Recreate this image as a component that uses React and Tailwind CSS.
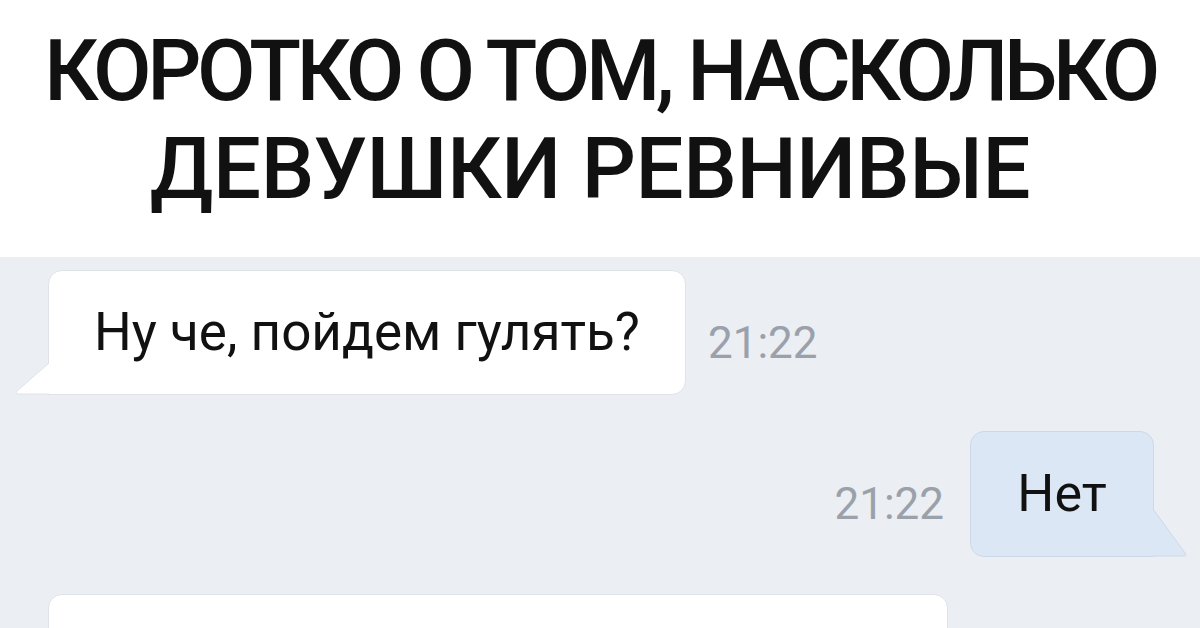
export default function App() {
  return (
    <div className="w-[1200px] h-[628px] overflow-hidden bg-[#ebeef2] font-['Roboto',sans-serif]">
      {/* Заголовок */}
      <div className="h-[257px] bg-white flex flex-col items-center pt-[22px]">
        <h1 className="text-[#111111] text-[85px] leading-[98px] font-medium text-center uppercase flex flex-col items-center">
          <span className="tracking-[-4.4px]">Коротко о том, насколько</span>
          <span className="tracking-[-0.4px] mr-[20px]">девушки ревнивые</span>
        </h1>
      </div>

      {/* Переписка */}
      <div className="flex flex-col pt-[13px]">
        <div className="flex items-end pl-[48px]">
          <div className="relative">
            <div className="bg-white border border-[#dfe3e8] rounded-[14px] rounded-bl-none w-[638px] h-[125px] flex items-center pl-[45px] text-[#111111] text-[53px]">
              Ну че, пойдем гулять?
            </div>
            <svg className="absolute left-[-34px] bottom-0" width="36" height="32" viewBox="0 0 36 32">
              <path d="M35 0 L35 31 L4 31 Q1 31 3 28 Z" fill="#ffffff" />
              <path d="M35 0 L3 28 Q1 31 4 31 L35 31" fill="none" stroke="#dfe3e8" strokeWidth="1" />
            </svg>
          </div>
          <span className="ml-[22px] mb-[19px] text-[#9aa1aa] text-[44px]">21:22</span>
        </div>

        <div className="flex items-end justify-end pr-[46px] mt-[36px]">
          <span className="mr-[26px] mb-[20px] text-[#9aa1aa] text-[44px]">21:22</span>
          <div className="relative">
            <div className="bg-[#dce7f5] border border-[#ccd9e8] rounded-[14px] rounded-br-none w-[184px] h-[126px] flex items-center justify-center text-[#111111] text-[52px]">
              Нет
            </div>
            <svg className="absolute right-[-34px] bottom-0" width="36" height="48" viewBox="0 0 36 48">
              <path d="M1 0 L1 47 L32 47 Q35 47 33 44 Z" fill="#dce7f5" />
              <path d="M1 0 L33 44 Q35 47 32 47 L1 47" fill="none" stroke="#ccd9e8" strokeWidth="1" />
            </svg>
          </div>
        </div>

        <div className="pl-[48px] mt-[37px]">
          <div className="bg-white border border-[#dfe3e8] rounded-[14px] w-[900px] h-[80px]" />
        </div>
      </div>
    </div>
  );
}
